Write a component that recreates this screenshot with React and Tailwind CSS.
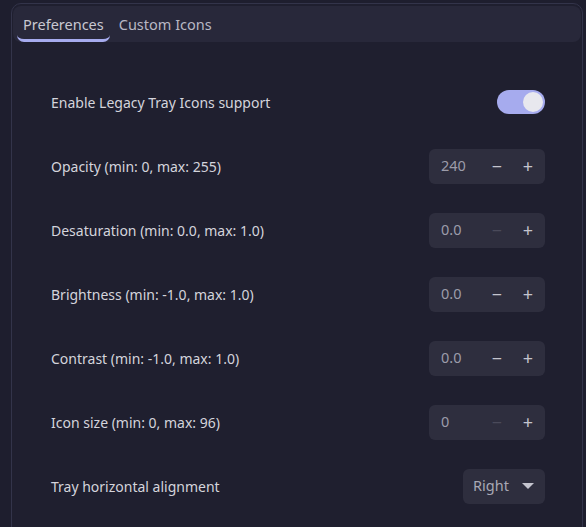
import { useState } from 'react';

const ROWS = [
  { label: 'Opacity (min: 0, max: 255)', value: '240', minusOff: false },
  { label: 'Desaturation (min: 0.0, max: 1.0)', value: '0.0', minusOff: true },
  { label: 'Brightness (min: -1.0, max: 1.0)', value: '0.0', minusOff: false },
  { label: 'Contrast (min: -1.0, max: 1.0)', value: '0.0', minusOff: false },
  { label: 'Icon size (min: 0, max: 96)', value: '0', minusOff: true },
];

function SpinBox({ value, minusOff }) {
  return (
    <div className="flex h-[35px] w-[116px] items-center rounded-md bg-[#2e2e3e] pl-3 pr-[12px]">
      <span className="flex-1 text-[14.5px] text-[#9c9caa]">{value}</span>
      <button className={`w-[24px] text-center text-[18px] leading-none ${minusOff ? 'text-[#4a4a5a]' : 'text-[#c4c4ce]'}`}>−</button>
      <button className="w-[24px] text-right text-[18px] leading-none text-[#c4c4ce]">+</button>
    </div>
  );
}

export default function App() {
  const [legacy, setLegacy] = useState(true);

  return (
    <div className="h-[527px] overflow-hidden bg-[#1e1e2e] pl-[11px] pr-[3px] pt-[3px]" style={{ fontFamily: '"Noto Sans", sans-serif' }}>
      <div className="h-[600px] rounded-t-[10px] border border-[#33344a] bg-[#1f1f2f] px-[1px] pt-[2px]">
        <div className="flex h-[36px] items-end gap-[9px] rounded-lg bg-[#28283a] px-[4px]">
          <button className="rounded-b-[7px] border-b-[3px] border-[#a6abee] px-[6px] pb-[3px] text-[14.5px] text-[#c8c8d2]">Preferences</button>
          <button className="pb-[6px] text-[14.5px] text-[#b8b8c4]">Custom Icons</button>
        </div>

        <div className="flex flex-col pl-[38px] pr-[36px] pt-[28px]">
          <div className="flex h-[64px] items-center justify-between">
            <span className="text-[14px] text-[#d4d4dc]">Enable Legacy Tray Icons support</span>
            <button
              onClick={() => setLegacy(!legacy)}
              className={`flex h-[24px] w-[48px] items-center rounded-full px-[2px] ${legacy ? 'justify-end bg-[#a6abee]' : 'justify-start bg-[#45475a]'}`}
            >
              <span className="h-[20px] w-[20px] rounded-full bg-[#e8e8ee]" />
            </button>
          </div>

          {ROWS.map((r) => (
            <div key={r.label} className="flex h-[64px] items-center justify-between">
              <span className="text-[14px] text-[#d4d4dc]">{r.label}</span>
              <SpinBox value={r.value} minusOff={r.minusOff} />
            </div>
          ))}

          <div className="flex h-[64px] items-center justify-between">
            <span className="text-[14px] text-[#d4d4dc]">Tray horizontal alignment</span>
            <button className="flex h-[35px] w-[82px] items-center justify-between rounded-md bg-[#2e2e3e] pl-[10px] pr-[10px]">
              <span className="text-[14.5px] text-[#a8a8b4]">Right</span>
              <svg width="14" height="8" viewBox="0 0 14 8">
                <path d="M1 1 L13 1 L7 7 Z" fill="#c4c4ce" />
              </svg>
            </button>
          </div>
        </div>
      </div>
    </div>
  );
}
